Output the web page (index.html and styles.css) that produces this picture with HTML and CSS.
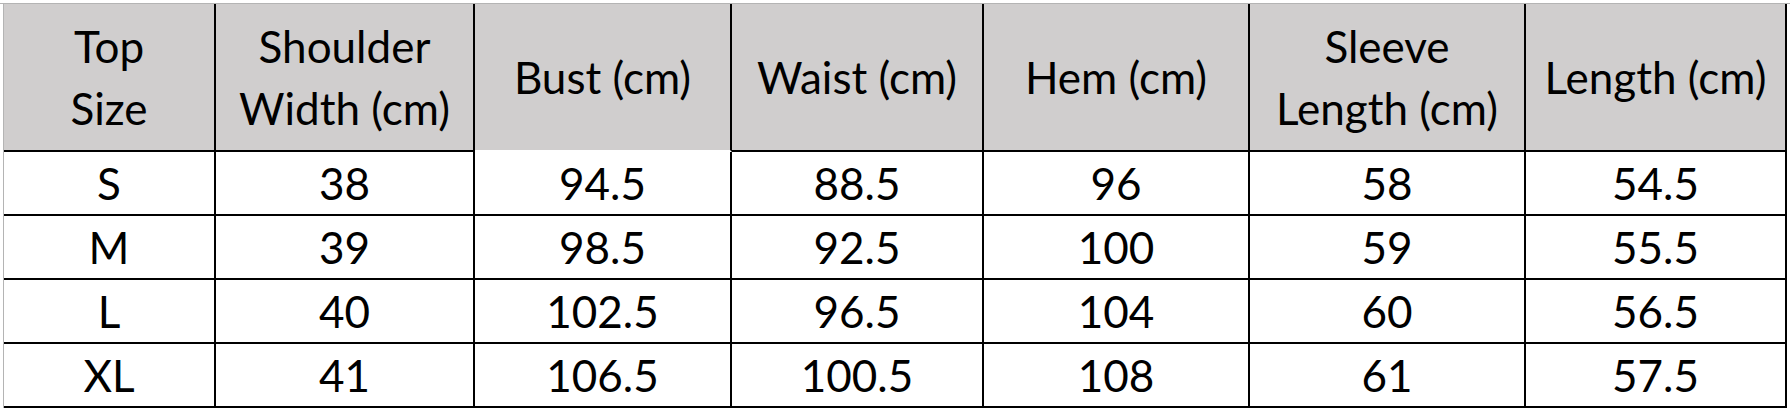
FILE: index.html
```
<!DOCTYPE html>
<html lang="en">
<head>
<meta charset="utf-8">
<title>Top Size Chart</title>
<link rel="stylesheet" href="styles.css">
</head>
<body>
<div class="page">
  <div class="sheet">
    <div class="table">
      <div class="cell hd"><span>Top<br>Size</span></div>
      <div class="cell hd"><span>Shoulder<br>Width (cm)</span></div>
      <div class="cell hd open"><span>Bust (cm)</span></div>
      <div class="cell hd"><span>Waist (cm)</span></div>
      <div class="cell hd"><span>Hem (cm)</span></div>
      <div class="cell hd"><span>Sleeve<br>Length (cm)</span></div>
      <div class="cell hd"><span>Length (cm)</span></div>

      <div class="cell">S</div>
      <div class="cell">38</div>
      <div class="cell">94.5</div>
      <div class="cell">88.5</div>
      <div class="cell">96</div>
      <div class="cell">58</div>
      <div class="cell">54.5</div>

      <div class="cell">M</div>
      <div class="cell">39</div>
      <div class="cell">98.5</div>
      <div class="cell">92.5</div>
      <div class="cell">100</div>
      <div class="cell">59</div>
      <div class="cell">55.5</div>

      <div class="cell">L</div>
      <div class="cell">40</div>
      <div class="cell">102.5</div>
      <div class="cell">96.5</div>
      <div class="cell">104</div>
      <div class="cell">60</div>
      <div class="cell">56.5</div>

      <div class="cell">XL</div>
      <div class="cell">41</div>
      <div class="cell">106.5</div>
      <div class="cell">100.5</div>
      <div class="cell">108</div>
      <div class="cell">61</div>
      <div class="cell">57.5</div>
    </div>
  </div>
</div>
</body>
</html>
```

FILE: styles.css
```
html, body {
  margin: 0;
  padding: 0;
  background: #ffffff;
}

.page {
  padding-top: 3px;
  width: 1790px;
  height: 409px;
  box-sizing: border-box;
  overflow: hidden;
  font-family: "Lato", "Open Sans", "Liberation Sans", sans-serif;
  color: #000;
}

.sheet {
  border-top: 1px solid #b4b4b4;
  padding-left: 3px;
}

.table {
  display: grid;
  grid-template-columns: 212px 259px 257px 252px 266px 276px 261px;
  grid-template-rows: 148px repeat(4, 64px);
  border-left: 1px solid #b4b4b4;
  width: max-content;
}

.cell {
  box-sizing: border-box;
  border-right: 2px solid #000;
  border-bottom: 2px solid #000;
  display: flex;
  align-items: center;
  justify-content: center;
  text-align: center;
  font-size: 44px;
  line-height: 62px;
  white-space: nowrap;
}

.hd {
  background: #d0cece;
}

.hd.open {
  border-bottom-color: #ffffff;
}
```
